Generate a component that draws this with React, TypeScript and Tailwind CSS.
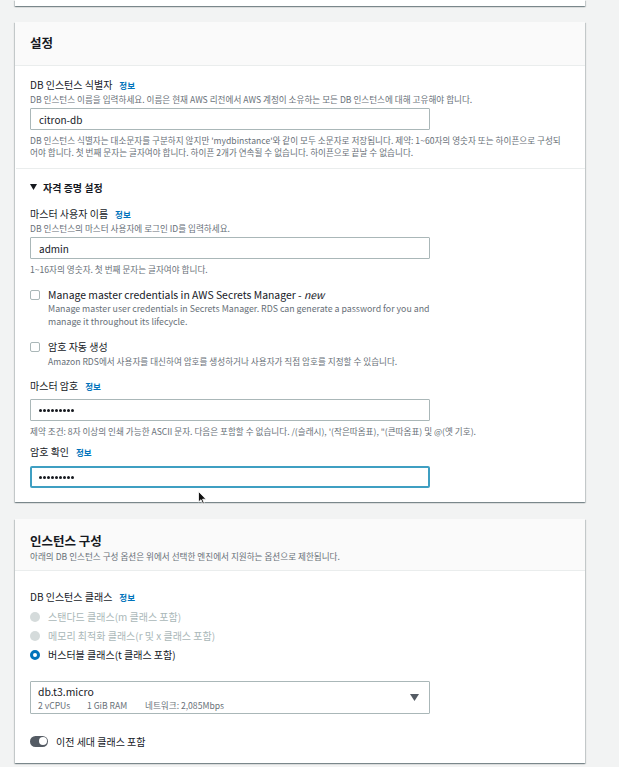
import React from "react";

function Info() {
  return <span className="ml-[7px] text-[8.5px] font-bold text-[#0073bb]">정보</span>;
}

function Label({ children }: { children: React.ReactNode }) {
  return (
    <div className="flex items-baseline h-[14px] leading-[14px] text-[10px] text-[#16191f]">
      {children}
      <Info />
    </div>
  );
}

function Desc({ children, className = "" }: { children: React.ReactNode; className?: string }) {
  return <div className={"text-[8.6px] leading-[12px] text-[#687078] whitespace-nowrap " + className}>{children}</div>;
}

function TextInput({ value, focused = false, dots = false }: { value: string; focused?: boolean; dots?: boolean }) {
  return (
    <div
      className={
        "w-[400px] h-[22px] flex items-center bg-white " +
        (focused ? "border-2 border-[#3f9fc2] rounded-[2px] px-[7px]" : "border border-[#aab7b8] rounded-[1px] px-[8px]")
      }
    >
      {dots ? (
        <div className="flex gap-[1px]" aria-label="password">
          {Array.from({ length: 9 }).map((_, i) => (
            <span key={i} className="w-[3px] h-[3px] rounded-full bg-[#16191f]" />
          ))}
        </div>
      ) : (
        <span className="text-[10px] text-[#16191f]">{value}</span>
      )}
    </div>
  );
}

function Checkbox() {
  return <div className="w-[10px] h-[10px] border border-[#aab7b8] rounded-[2px] bg-white mt-[2px] shrink-0" />;
}

function Radio({ label, state }: { label: string; state: "disabled" | "on" }) {
  return (
    <div className="flex items-center h-[19px] gap-[8px]">
      {state === "on" ? (
        <div className="w-[10px] h-[10px] rounded-full border-[3px] border-[#0073bb] bg-white" />
      ) : (
        <div className="w-[10px] h-[10px] rounded-full bg-[#d5dbdb]" />
      )}
      <span className={"text-[10px] " + (state === "on" ? "text-[#16191f]" : "text-[#aab7b8]")}>{label}</span>
    </div>
  );
}

const cardShadow =
  "shadow-[0_1px_1px_0_rgba(0,28,36,0.3),1px_1px_1px_0_rgba(0,28,36,0.15),-1px_1px_1px_0_rgba(0,28,36,0.15)]";

export default function App() {
  return (
    <div className="relative w-[619px] h-[767px] overflow-hidden bg-[#f2f3f3] font-['Noto_Sans_CJK_KR','Noto_Sans',sans-serif]">
      <div className="pl-[15px] w-[585px]">
        {/* previous card tail */}
        <div className={"h-[6px] bg-white " + cardShadow} />

        {/* 설정 */}
        <div className={"mt-[16px] bg-white " + cardShadow}>
          <div className="h-[44px] flex items-center px-[15px] bg-[#fafafa] border-b border-[#eaeded]">
            <h2 className="text-[12.5px] font-bold text-[#16191f]">설정</h2>
          </div>
          <div className="px-[15px] pt-[12px] pb-[14px]">
            <Label>DB 인스턴스 식별자</Label>
            <Desc className="mt-[1px]">
              DB 인스턴스 이름을 입력하세요. 이름은 현재 AWS 리전에서 AWS 계정이 소유하는 모든 DB 인스턴스에 대해 고유해야 합니다.
            </Desc>
            <div className="mt-[3px]">
              <TextInput value="citron-db" />
            </div>
            <Desc className="mt-[4px]">
              DB 인스턴스 식별자는 대소문자를 구분하지 않지만 'mydbinstance'와 같이 모두 소문자로 저장됩니다. 제약: 1~60자의 영숫자 또는 하이픈으로 구성되
              <br />
              어야 합니다. 첫 번째 문자는 글자여야 합니다. 하이픈 2개가 연속될 수 없습니다. 하이픈으로 끝날 수 없습니다.
            </Desc>
          </div>
          <div className="-mt-[4px] ml-[1px] border-t border-[#eaeded]" />
          <div className="px-[15px] pt-[11px] pb-[14px]">
            <div className="flex items-center h-[14px] gap-[6px] text-[10px] font-bold text-[#16191f]">
              <svg width="7" height="6" viewBox="0 0 7 6">
                <path d="M0 0 L7 0 L3.5 6 Z" fill="#16191f" />
              </svg>
              자격 증명 설정
            </div>

            <div className="mt-[13px]">
              <Label>마스터 사용자 이름</Label>
            </div>
            <Desc className="mt-[1px]">DB 인스턴스의 마스터 사용자에 로그인 ID를 입력하세요.</Desc>
            <div className="mt-[3px]">
              <TextInput value="admin" />
            </div>
            <Desc className="mt-[4px]">1~16자의 영숫자. 첫 번째 문자는 글자여야 합니다.</Desc>

            <div className="mt-[13px] flex gap-[8px]">
              <Checkbox />
              <div>
                <div className="h-[14px] leading-[14px] text-[10.4px] text-[#16191f]">
                  Manage master credentials in AWS Secrets Manager - <i>new</i>
                </div>
                <div className="text-[8.8px] leading-[13px] text-[#687078]">
                  Manage master user credentials in Secrets Manager. RDS can generate a password for you and
                  <br />
                  manage it throughout its lifecycle.
                </div>
              </div>
            </div>

            <div className="mt-[12px] flex gap-[8px]">
              <Checkbox />
              <div>
                <div className="h-[14px] leading-[14px] text-[10px] text-[#16191f]">암호 자동 생성</div>
                <Desc className="mt-[1px]">Amazon RDS에서 사용자를 대신하여 암호를 생성하거나 사용자가 직접 암호를 지정할 수 있습니다.</Desc>
              </div>
            </div>

            <div className="mt-[12px]">
              <Label>마스터 암호</Label>
            </div>
            <div className="mt-[6px]">
              <TextInput value="" dots />
            </div>
            <Desc className="mt-[4px]">
              제약 조건: 8자 이상의 인쇄 가능한 ASCII 문자. 다음은 포함할 수 없습니다. /(슬래시), '(작은따옴표), "(큰따옴표) 및 @(옛 기호).
            </Desc>

            <div className="mt-[8px]">
              <Label>암호 확인</Label>
            </div>
            <div className="mt-[7px]">
              <TextInput value="" dots focused />
            </div>
          </div>
        </div>

        {/* 인스턴스 구성 */}
        <div className={"mt-[17px] bg-white " + cardShadow}>
          <div className="px-[15px] pt-[14px] pb-[8px] bg-[#fafafa] border-b border-[#eaeded]">
            <h2 className="h-[16px] leading-[16px] text-[12.5px] font-bold text-[#16191f]">인스턴스 구성</h2>
            <Desc className="mt-[1px]">아래의 DB 인스턴스 구성 옵션은 위에서 선택한 엔진에서 지원하는 옵션으로 제한됩니다.</Desc>
          </div>
          <div className="px-[15px] pt-[19px] pb-[15px]">
            <Label>DB 인스턴스 클래스</Label>
            <div className="mt-[3px]">
              <Radio label="스탠다드 클래스(m 클래스 포함)" state="disabled" />
              <Radio label="메모리 최적화 클래스(r 및 x 클래스 포함)" state="disabled" />
              <Radio label="버스터블 클래스(t 클래스 포함)" state="on" />
            </div>

            <div className="mt-[17px] w-[400px] h-[33px] border border-[#aab7b8] rounded-[1px] flex items-center justify-between pl-[7px] pr-[10px]">
              <div>
                <div className="text-[10.4px] leading-[14px] text-[#16191f]">db.t3.micro</div>
                <div className="flex text-[8.6px] leading-[12px] text-[#687078]">
                  <span className="w-[49px]">2 vCPUs</span>
                  <span className="w-[58px]">1 GiB RAM</span>
                  <span>네트워크: 2,085Mbps</span>
                </div>
              </div>
              <svg width="9" height="7" viewBox="0 0 9 7">
                <path d="M0 0 L9 0 L4.5 7 Z" fill="#545b64" />
              </svg>
            </div>

            <div className="mt-[20px] flex items-center h-[14px] gap-[8px]">
              <div className="w-[18px] h-[11px] rounded-full bg-[#545b64] flex items-center justify-end pr-[1.5px]">
                <div className="w-[8px] h-[8px] rounded-full bg-white" />
              </div>
              <span className="text-[10px] text-[#16191f]">이전 세대 클래스 포함</span>
            </div>
          </div>
        </div>
      </div>

      {/* mouse cursor */}
      <svg className="absolute left-[198px] top-[491px]" width="9" height="14" viewBox="0 0 9 14">
        <path d="M0.5 0.5 L0.5 11 L3 8.7 L4.8 13 L6.3 12.3 L4.6 8.2 L8 8.2 Z" fill="#111" stroke="#fff" strokeWidth="0.8" />
      </svg>
    </div>
  );
}
